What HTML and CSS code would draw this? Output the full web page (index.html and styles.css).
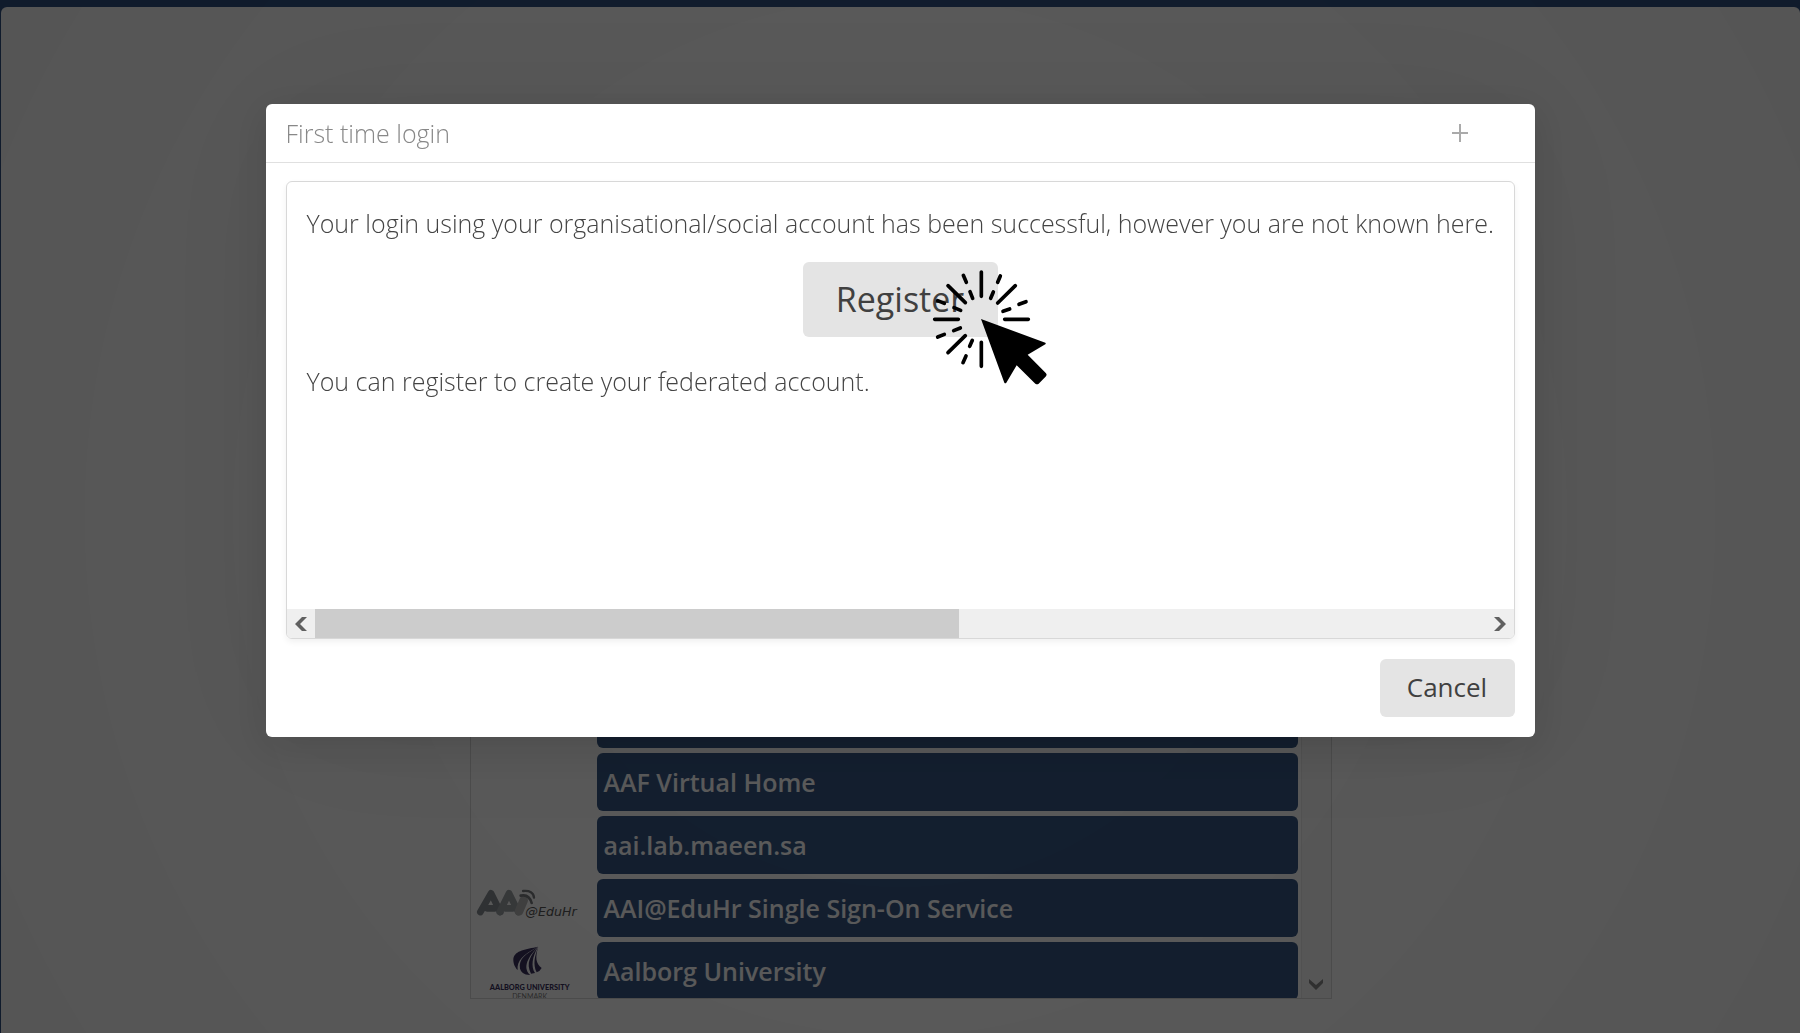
FILE: index.html
```html
<!DOCTYPE html>
<html lang="en">
<head>
<meta charset="utf-8">
<title>First time login</title>
<link rel="stylesheet" href="styles.css">
</head>
<body>
<main class="page">
  <div class="idp-list">
    <ul class="idp-rows">
      <li class="idp-row"><span class="idp-logo"></span><span class="idp-blank"></span></li>
      <li class="idp-row"><span class="idp-logo"></span><button class="idp-name" type="button">AAF Virtual Home</button></li>
      <li class="idp-row"><span class="idp-logo"></span><button class="idp-name" type="button">aai.lab.maeen.sa</button></li>
      <li class="idp-row">
        <span class="idp-logo">
          <svg width="125" height="58" viewBox="0 0 375 174">
            <g fill="none" stroke-linecap="round" stroke-linejoin="round">
              <path d="M28 99 60 43 88 99M48 88h24" stroke="#858b91" stroke-width="20"/>
              <path d="M86 99 114 43 142 99M102 88h24" stroke="#989ea3" stroke-width="20"/>
              <path d="M144 97 158 64" stroke="#b4b4b4" stroke-width="26"/>
              <path d="M149 50q25-6 33 22" stroke="#77797d" stroke-width="8"/>
              <path d="M156 36q31-3 33 20" stroke="#77797d" stroke-width="7"/>
            </g>
            <text class="edu" x="163" y="111">@EduHr</text>
          </svg>
        </span>
        <button class="idp-name" type="button">AAI@EduHr Single Sign-On Service</button>
      </li>
      <li class="idp-row">
        <span class="idp-logo">
          <svg width="125" height="58" viewBox="0 0 375 174">
            <g fill="#39305c">
              <path d="M201 14C165 22 132 24 127 50c-1 15 6 27 13 34-3-28 15-46 61-70z"/>
              <path d="M201 14C164 36 142 50 147 80c3 9 10 18 31 19-20-17-16-46 23-85z"/>
              <path d="M201 14C178 42 164 62 180 95l12-2c-13-20-8-48 9-79z"/>
              <path d="M202 14c-10 33-8 49 10 64q-5 10-15 13c-12-24-6-50 5-77z"/>
            </g>
            <text class="aau" x="176" y="143" text-anchor="middle">AALBORG UNIVERSITY</text>
            <text class="aau-sub" x="176" y="171" text-anchor="middle">DENMARK</text>
          </svg>
        </span>
        <button class="idp-name" type="button">Aalborg University</button>
      </li>
    </ul>
    <div class="vbar">
      <button class="vbar-down" type="button" aria-label="Scroll down">
        <svg width="16" height="12" viewBox="0 0 16 12"><path d="M1 1v4l7 7 7-7V1L8 7z" fill="#888"/></svg>
      </button>
    </div>
  </div>
</main>

<div class="overlay">
  <section class="dialog" role="dialog" aria-labelledby="dialog-title">
    <header class="dialog-head">
      <h1 class="dialog-title" id="dialog-title">First time login</h1>
      <button class="maximize" type="button" aria-label="Maximize">
        <svg width="18" height="18" viewBox="0 0 18 18"><path d="M9 0v18M1 9h16" stroke="#aaa" stroke-width="2"/></svg>
      </button>
    </header>
    <div class="panel">
      <div class="panel-content">
        <p class="message">Your login using your organisational/social account has been successful, however you are not known here.</p>
        <div class="register-wrap">
          <button class="register" type="button">Register</button>
          <svg class="pointer" width="120" height="120" viewBox="450 84 360 360">
            <g stroke="#000" stroke-width="11" stroke-linecap="round" fill="none">
              <path d="M601 96v73M601 307v72M461 238h71M671 238h71M501 137l52 51M703 137l-53 52M501 338l52-51"/>
              <path d="M547 106l9 21M567 155l8 20M658 108l-8 19M637 156l-8 19M470 182l20 8M519 203l20 8M735 185l-21 8M686 207l-20 7M538 264l-20 8M490 283l-20 8M574 301l-8 18M555 348l-9 20"/>
            </g>
            <path d="M600 237 793 308q3 3 0 5L740 344 795 400q4 5 0 9L773 431q-4 3-10 0L707 376 676 428q-3 4-6 0z"/>
          </svg>
        </div>
        <p class="message">You can register to create your federated account.</p>
      </div>
      <div class="hbar">
        <button class="hbar-end" type="button" aria-label="Scroll left">
          <svg width="12" height="16" viewBox="0 0 12 16"><path d="M12 1H7L0 8l7 7h5L5 8z" fill="#606060"/></svg>
        </button>
        <div class="hbar-track"><div class="hbar-thumb"></div></div>
        <button class="hbar-end" type="button" aria-label="Scroll right">
          <svg width="12" height="16" viewBox="0 0 12 16"><path d="M0 1h5l7 7-7 7H0l7-7z" fill="#606060"/></svg>
        </button>
      </div>
    </div>
    <footer class="dialog-foot"><button class="cancel" type="button">Cancel</button></footer>
  </section>
</div>
</body>
</html>
```
FILE: styles.css
```css
* { box-sizing: border-box; }

body {
  margin: 0;
  min-height: 100vh;
  padding: 7px 0 0 1px;
  display: flex;
  background: #305080;
  font-family: "Open Sans", sans-serif;
  overflow: hidden;
}

button {
  border: 0;
  margin: 0;
  padding: 0;
  background: none;
  font-family: inherit;
}

svg { display: block; }

.page {
  flex: 1;
  display: flex;
  flex-direction: column;
  justify-content: flex-end;
  align-items: center;
  padding-bottom: 34px;
  background: #fafafa;
  border-radius: 6px 6px 0 0;
}

.idp-list {
  width: 862px;
  height: 310px;
  display: flex;
  border: 1px solid #d4d4d4;
  overflow: hidden;
}

.idp-rows {
  flex: 1;
  margin: 0;
  padding: 1px 3px 0 0;
  list-style: none;
  display: flex;
  flex-direction: column;
  gap: 5px;
}

.idp-row {
  flex: none;
  height: 58px;
  display: flex;
}

.idp-row:first-child { height: 57px; }

.idp-logo { width: 126px; }

.idp-name,
.idp-blank {
  flex: 1;
  padding: 0 7px;
  border-radius: 6px;
  background: #365682;
  color: #fafafa;
  font-size: 25px;
  font-weight: 600;
  text-align: left;
}

.edu {
  font: italic 38px "DejaVu Sans", sans-serif;
  fill: #555;
}

.aau {
  font: 900 22px Lato, sans-serif;
  fill: #39305c;
}

.aau-sub {
  font: 21px Lato, sans-serif;
  fill: #777;
}

.vbar {
  width: 30px;
  display: flex;
  align-items: flex-end;
  justify-content: center;
  border-left: 1px solid #e4e4e4;
  background: #f4f4f4;
}

.vbar-down { padding-bottom: 8px; }

.overlay {
  position: fixed;
  inset: 0;
  display: flex;
  align-items: flex-start;
  justify-content: center;
  padding-top: 104px;
  background: radial-gradient(circle at 50% 50%, rgba(0, 0, 0, .63), rgba(0, 0, 0, .66));
}

.dialog {
  width: 1269px;
  max-width: 96%;
  border-radius: 6px;
  background: #fff;
  box-shadow: 0 8px 40px rgba(0, 0, 0, .14), 0 0 160px rgba(0, 0, 0, .08);
}

.dialog-head {
  height: 59px;
  padding: 0 66px 0 20px;
  display: flex;
  align-items: center;
  justify-content: space-between;
  border-bottom: 1px solid #e0e0e0;
}

.dialog-title {
  margin: 0;
  color: #888;
  font-size: 25px;
  font-weight: 300;
}

.panel {
  margin: 18px 20px 0;
  height: 458px;
  display: flex;
  flex-direction: column;
  border: 1px solid #d8d8d8;
  border-radius: 6px;
  box-shadow: 0 3px 6px rgba(0, 0, 0, .06);
  overflow: hidden;
}

.panel-content {
  flex: 1;
  padding: 20px;
}

.message {
  margin: 0;
  color: #444;
  font-size: 25px;
  font-weight: 300;
  line-height: 42px;
  white-space: nowrap;
}

.register-wrap {
  position: relative;
  width: 195px;
  margin: 18px auto 23px;
}

.register,
.cancel {
  border-radius: 6px;
  background: #e4e4e4;
  color: #404040;
}

.register {
  width: 195px;
  height: 75px;
  padding-bottom: 2px;
  font-size: 34px;
}

.pointer {
  position: absolute;
  left: 128px;
  top: 6px;
}

.hbar {
  flex: none;
  height: 29px;
  display: flex;
  background: #efefef;
}

.hbar-end {
  width: 28px;
  display: flex;
  align-items: center;
  justify-content: center;
}

.hbar-track {
  flex: 1;
  display: flex;
}

.hbar-thumb {
  width: 55%;
  background: #ccc;
}

.dialog-foot {
  padding: 20px;
  display: flex;
  justify-content: flex-end;
}

.cancel {
  width: 135px;
  height: 58px;
  padding-bottom: 2px;
  font-size: 26px;
}
```
